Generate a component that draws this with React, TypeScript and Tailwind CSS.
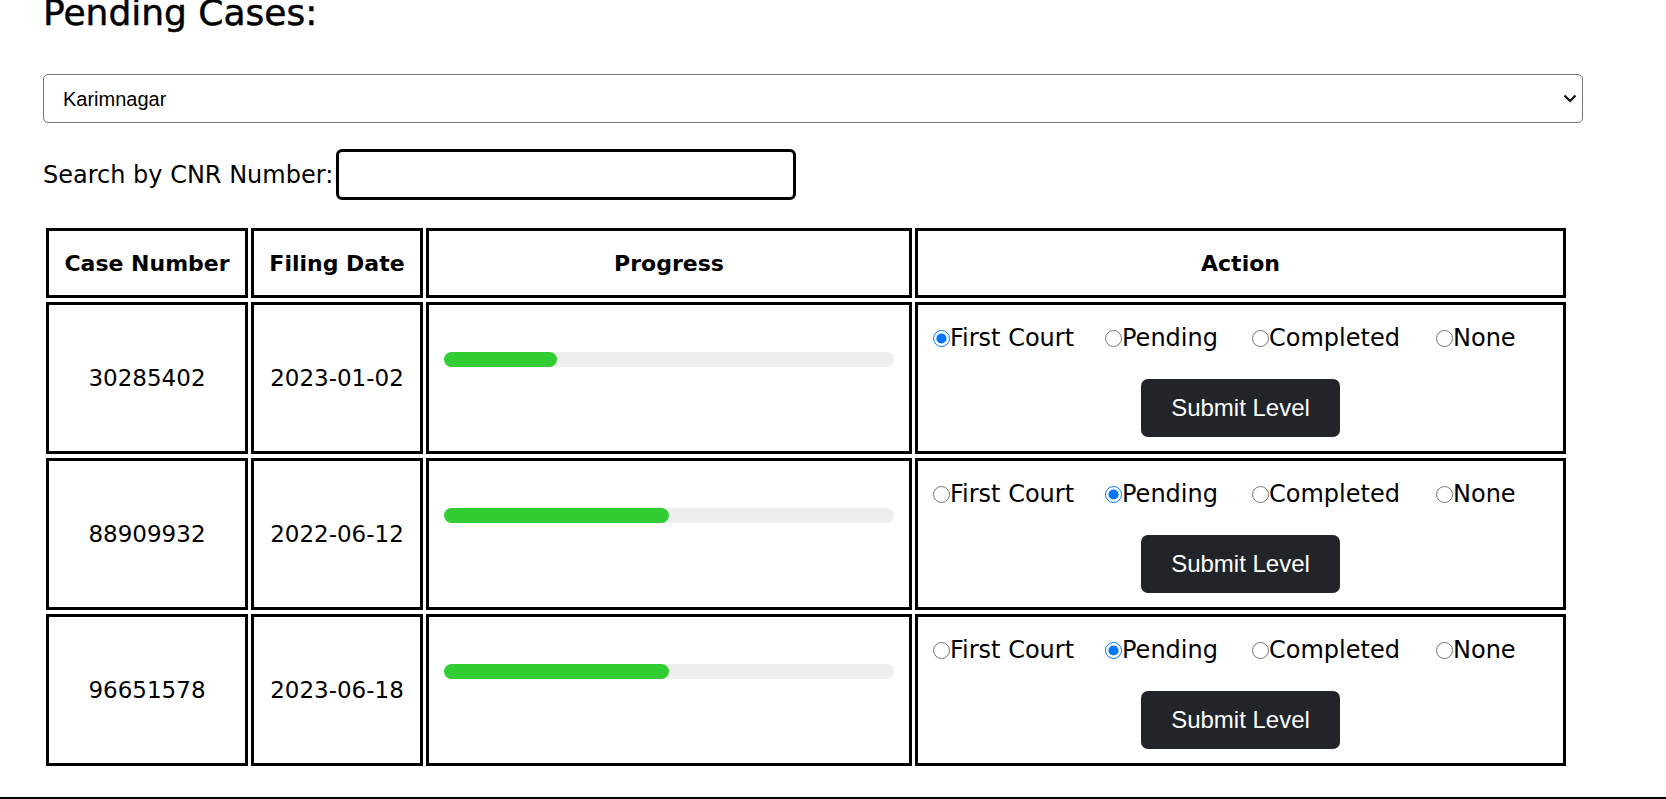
const cases = [
  { num: "30285402", date: "2023-01-02", progress: 25, level: "First Court" },
  { num: "88909932", date: "2022-06-12", progress: 50, level: "Pending" },
  { num: "96651578", date: "2023-06-18", progress: 50, level: "Pending" },
]

const levels = [
  { name: "First Court", w: "w-[172px]" },
  { name: "Pending", w: "w-[147px]" },
  { name: "Completed", w: "w-[184px]" },
  { name: "None", w: "" },
]

function App() {
  return (
    <div className="min-h-screen overflow-hidden bg-white text-black font-['DejaVu_Sans',sans-serif]">
      <div className="pl-[43px]">
        <h2 className="-mt-[5px] text-[36px] leading-none [-webkit-text-stroke:0.5px_black]">Pending Cases:</h2>

        <div className="relative mt-[43px] w-[1540px]">
          <select
            defaultValue="Karimnagar"
            className="w-full h-[49px] appearance-none rounded-[5px] border border-[#767676] bg-white pl-[19px] font-['Liberation_Sans',sans-serif] text-[20px] text-black"
          >
            <option>Karimnagar</option>
            <option>Hyderabad</option>
            <option>Warangal</option>
          </select>
          <svg className="pointer-events-none absolute right-[6px] top-[20px]" width="14" height="9" viewBox="0 0 14 9">
            <polyline points="1.5,1.5 7,7 12.5,1.5" fill="none" stroke="#111" strokeWidth="2.2" />
          </svg>
        </div>

        <div className="mt-[26px] flex items-center">
          <label className="text-[24px] leading-none pr-[3px]">Search by CNR Number:</label>
          <input type="text" className="w-[460px] h-[51px] rounded-[6px] border-[3px] border-black px-2 text-[20px] outline-none" />
        </div>

        <table className="mt-[24px] table-fixed w-[1526px] border-separate border-spacing-x-[3px] border-spacing-y-[4px]">
          <thead>
            <tr>
              <th className="w-[202px] h-[70px] border-[3px] border-black text-[22px] font-bold">Case Number</th>
              <th className="w-[172px] border-[3px] border-black text-[22px] font-bold">Filing Date</th>
              <th className="w-[486px] border-[3px] border-black text-[22px] font-bold">Progress</th>
              <th className="border-[3px] border-black text-[22px] font-bold">Action</th>
            </tr>
          </thead>
          <tbody>
            {cases.map((c, i) => (
              <tr key={c.num}>
                <td className="h-[152px] border-[3px] border-black text-center text-[23px]">{c.num}</td>
                <td className="border-[3px] border-black text-center text-[23px]">{c.date}</td>
                <td className="border-[3px] border-black align-top px-[15px] pt-[47px]">
                  <div className="h-[15px] w-full rounded-full bg-[#eeeeee]">
                    <div className="h-full rounded-full bg-[#32cd32]" style={{ width: `${c.progress}%` }} />
                  </div>
                </td>
                <td className="border-[3px] border-black align-top px-[15px] pt-[15px]">
                  <div className="flex h-[36px] items-center text-[24px]">
                    {levels.map((l) => (
                      <label key={l.name} className={`flex items-center ${l.w}`}>
                        <input
                          type="radio"
                          name={`level-${i}`}
                          defaultChecked={l.name === c.level}
                          className="m-0 h-[17px] w-[17px] shrink-0 accent-[#0075ff]"
                        />
                        <span>{l.name}</span>
                      </label>
                    ))}
                  </div>
                  <div className="mt-[23px] flex justify-center">
                    <button className="h-[58px] w-[199px] rounded-[7px] bg-[#212529] font-['Liberation_Sans',sans-serif] text-[24px] text-white">
                      Submit Level
                    </button>
                  </div>
                </td>
              </tr>
            ))}
          </tbody>
        </table>
      </div>
      <div className="mt-[27px] h-[2px] w-full bg-black" />
    </div>
  )
}

export default App
